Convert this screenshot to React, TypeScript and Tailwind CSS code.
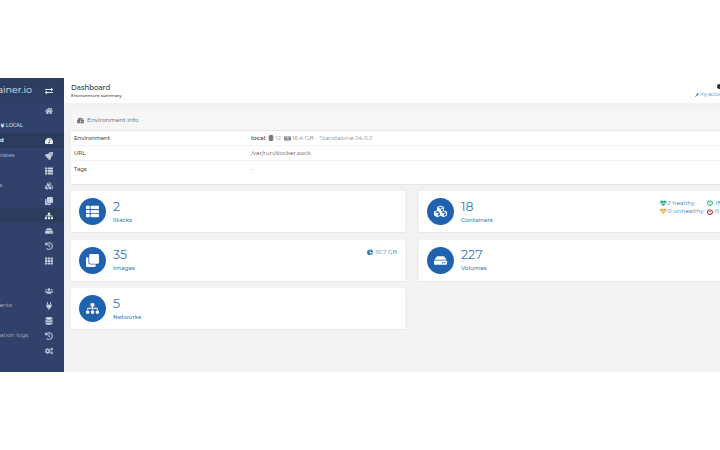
import { ReactNode } from 'react';
import {
  FaChartPie,
  FaClone,
  FaCogs,
  FaCubes,
  FaDatabase,
  FaExchangeAlt,
  FaHdd,
  FaHeartbeat,
  FaHistory,
  FaHome,
  FaMemory,
  FaMicrochip,
  FaPlug,
  FaPowerOff,
  FaRocket,
  FaSitemap,
  FaTachometerAlt,
  FaTh,
  FaThList,
  FaUsers,
  FaWrench,
} from 'react-icons/fa';
import { IconType } from 'react-icons';

const font = { fontFamily: 'Montserrat, Inter, "Liberation Sans", sans-serif' };

const navItems: { label?: string; icon?: IconType; active?: boolean; strong?: boolean; section?: boolean }[] = [
  { label: '', icon: FaHome },
  { label: 'LOCAL', section: true },
  { label: 'Dashboard', icon: FaTachometerAlt, active: true, strong: true },
  { label: 'App Templates', icon: FaRocket },
  { label: 'Stacks', icon: FaThList },
  { label: 'Containers', icon: FaCubes },
  { label: 'Images', icon: FaClone },
  { label: 'Networks', icon: FaSitemap, active: true, strong: true },
  { label: 'Volumes', icon: FaHdd },
  { label: 'Events', icon: FaHistory },
  { label: 'Host', icon: FaTh },
  { label: '' },
  { label: 'Users', icon: FaUsers },
  { label: 'Environments', icon: FaPlug },
  { label: 'Registries', icon: FaDatabase },
  { label: 'Authentication logs', icon: FaHistory },
  { label: '', icon: FaCogs },
];

function Sidebar() {
  return (
    <aside className="w-[64px] shrink-0 overflow-hidden bg-[#30426b]">
      <div className="ml-[-56px] w-[120px]">
        <div className="flex h-[25px] items-center justify-end gap-[13px] bg-[#2d3e63] pr-[11px]">
          <span className="whitespace-nowrap text-[9.5px] text-[#e4e8f0]">portainer.io</span>
          <FaExchangeAlt className="text-[8px] text-[#dfe4ee]" />
        </div>
        <div>
          {navItems.map((item, i) =>
            item.section ? (
              <div key={i} className="flex h-[15px] items-center justify-end pr-[41px] text-[5px] font-medium text-[#dfe4ee]">
                <FaPlug className="mr-[1px] text-[5px]" />
                {item.label}
              </div>
            ) : (
              <div key={i} className={`flex h-[15px] items-center pl-[27px] ${item.active ? 'bg-[#2c3c5f]' : ''}`}>
                <span
                  className={`whitespace-nowrap text-[5.8px] ${
                    item.strong ? 'font-semibold text-white' : 'text-[#b3bccf]'
                  }`}
                >
                  {item.label}
                </span>
                {item.icon && (
                  <span className="ml-auto mr-[7px] flex w-[16px] justify-center">
                    <item.icon className={`text-[8px] ${item.strong ? 'text-white' : 'text-[#c3cbdc]'}`} />
                  </span>
                )}
              </div>
            ),
          )}
        </div>
      </div>
    </aside>
  );
}

function InfoRow({ name, children, tall }: { name: string; children: ReactNode; tall?: boolean }) {
  return (
    <div className={`flex border-b border-[#f2f2f2] last:border-b-0 ${tall ? 'h-[23px] pt-[4px]' : 'h-[15px] items-center'}`}>
      <div className="w-[180px] pl-[3px] text-[5.4px] font-medium leading-[8px] text-[#444]">{name}</div>
      <div className="text-[6px] leading-[8px] text-[#555]">{children}</div>
    </div>
  );
}

function StatCard({
  value,
  label,
  icon: Icon,
  children,
}: {
  value: string;
  label: string;
  icon: IconType;
  children?: ReactNode;
}) {
  return (
    <div className="relative flex h-[41px] items-center rounded-[1px] bg-white pl-[8px] shadow-[0_1px_1px_rgba(0,0,0,0.05)]">
      <div className="flex h-[27px] w-[27px] items-center justify-center rounded-full bg-[#2162b0]">
        <Icon className="text-[13px] text-white" />
      </div>
      <div className="ml-[7px] flex flex-col pb-[1px] text-[#337ab7]">
        <span className="text-[12.5px] leading-[15px]">{value}</span>
        <span className="mt-[2px] text-[5.8px] font-medium leading-[8px]">{label}</span>
      </div>
      {children}
    </div>
  );
}

export default function App() {
  return (
    <div className="h-[450px] w-[720px] overflow-hidden bg-white" style={font}>
      <div className="mt-[78px] flex h-[294px] w-[760px]">
        <Sidebar />
        <main className="flex w-[696px] shrink-0 flex-col bg-[#f2f2f2]">
          <header className="relative flex h-[25px] flex-col justify-center bg-white pl-[7px]">
            <div className="text-[7px] font-medium leading-[10px] text-[#333]">Dashboard</div>
            <div className="text-[4.3px] font-medium leading-[6px] text-[#333]">Environment summary</div>
            <div className="absolute left-[653px] top-[6px] h-[5px] w-[5px] rounded-full bg-[#333]" />
            <div className="absolute left-[631px] top-[14px] flex items-center whitespace-nowrap text-[4.5px] text-[#337ab7]">
              <FaWrench className="mr-[1px] text-[4px]" />
              my account
            </div>
          </header>

          <div className="flex flex-col gap-[7px] px-[7px] pt-[7px]">
            <section className="rounded-[1px] bg-white shadow-[0_1px_1px_rgba(0,0,0,0.06)]">
              <div className="flex h-[21px] items-center border-b border-[#e6e6e6] bg-[#f6f6f6] pl-[6px] text-[5.8px] font-medium text-[#777]">
                <FaTachometerAlt className="text-[7px] text-[#666]" />
                <span className="ml-[3px]">Environment info</span>
              </div>
              <InfoRow name="Environment">
                <span className="flex items-center">
                  <span className="font-semibold">local</span>
                  <FaMicrochip className="ml-[3px] text-[6px] text-[#777]" />
                  <span className="ml-[1px] text-[#888]">12</span>
                  <FaMemory className="ml-[3px] text-[7px] text-[#777]" />
                  <span className="ml-[1px] text-[#888]">16.4 GB - Standalone 24.0.2</span>
                </span>
              </InfoRow>
              <InfoRow name="URL">/var/run/docker.sock</InfoRow>
              <InfoRow name="Tags" tall>
                -
              </InfoRow>
            </section>

            <div className="grid grid-cols-2 gap-x-[14px] gap-y-[7.5px]">
              <StatCard value="2" label="Stacks" icon={FaThList} />
              <StatCard value="18" label="Containers" icon={FaCubes}>
                <div className="absolute left-[241px] top-[8.5px] grid grid-cols-[47px_auto] gap-y-[1.5px] text-[6px] leading-[7px] text-[#337ab7]">
                  <span className="flex items-center">
                    <FaHeartbeat className="mr-[1px] text-[6.5px] text-[#23ae89]" />2 healthy
                  </span>
                  <span className="flex items-center">
                    <FaPowerOff className="mr-[2px] text-[6px] text-[#23ae89]" />18 running
                  </span>
                  <span className="flex items-center whitespace-nowrap">
                    <FaHeartbeat className="mr-[1px] text-[6.5px] text-[#f0ad4e]" />0 unhealthy
                  </span>
                  <span className="flex items-center">
                    <FaPowerOff className="mr-[2px] text-[6px] text-[#ae2323]" />0 stopped
                  </span>
                </div>
              </StatCard>
              <StatCard value="35" label="Images" icon={FaClone}>
                <div className="absolute right-[8px] top-[8px] flex items-center text-[6px] text-[#337ab7]">
                  <FaChartPie className="mr-[2px] text-[6.5px]" />
                  10.7 GB
                </div>
              </StatCard>
              <StatCard value="227" label="Volumes" icon={FaHdd} />
              <StatCard value="5" label="Networks" icon={FaSitemap} />
            </div>
          </div>
        </main>
      </div>
    </div>
  );
}
